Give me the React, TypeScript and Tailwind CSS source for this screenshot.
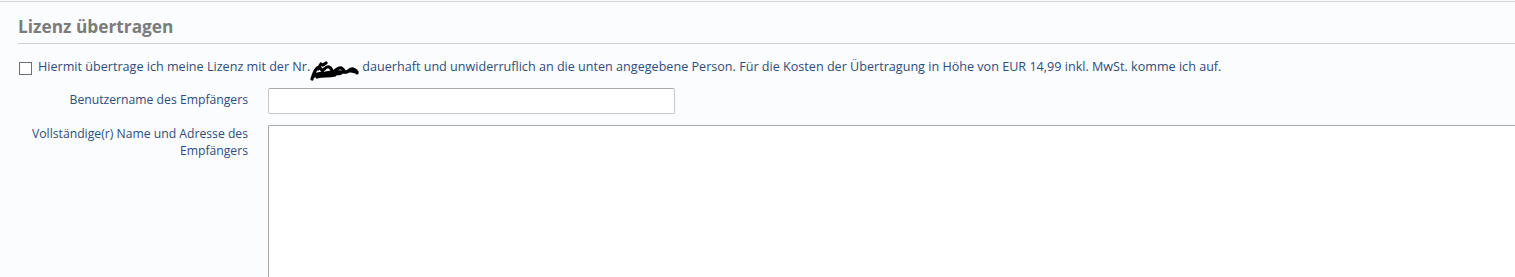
export default function App() {
  return (
    <div className="h-[277px] w-[1515px] overflow-hidden bg-[#fbfcfe] font-['Open_Sans',sans-serif] text-[12.2px] text-[#2e4d7c]">
      <div className="h-[2px] border-t border-[#d4d4d4] mt-px" />
      <div className="pl-[18px] pt-[13px]">
        <h2 className="text-[17.3px] font-bold leading-[22px] text-[#7b7b7b] pb-[5px] border-b border-[#cfcfcf]">Lizenz übertragen</h2>
        <div className="mt-[17px] flex h-[14px] items-center">
          <span className="ml-px h-[13px] w-[13px] border border-[#707070] bg-white" />
          <span className="ml-[6px] whitespace-nowrap text-[12.6px] leading-[14px]">
            Hiermit übertrage ich meine Lizenz mit der Nr.
            <svg width="50" height="20" viewBox="0 0 50 20" className="inline-block align-[-6px] -ml-[1px] mr-[3px] -my-[4px]">
              <path d="M3 18 C6 8 9 4 12 8 C14 13 16 4 20 6 C24 7 22 14 27 9 C30 6 33 6 35 10 C38 14 40 7 44 8 C47 9 48 11 48 12 M5 15 C10 10 16 14 22 11 C28 9 34 13 40 10 C44 9 46 12 48 11 M9 8 L12 3 M14 4 L17 2 M15 13 C19 9 26 15 32 12 M8 16 C14 14 20 16 26 14" stroke="#000" strokeWidth="3.2" fill="none" strokeLinecap="round" />
            </svg>
            dauerhaft und unwiderruflich an die unten angegebene Person. Für die Kosten der Übertragung in Höhe von EUR 14,99 inkl. MwSt. komme ich auf.
          </span>
        </div>
        <div className="mt-[13px] flex items-start">
          <label className="w-[230px] pt-[4px] text-right leading-[16px]">Benutzername des Empfängers</label>
          <input className="ml-[20px] h-[26px] w-[407px] rounded-[2px] border border-[#c8c8c8] border-t-[#a9a9a9] bg-white" />
        </div>
        <div className="mt-[11px] flex items-start">
          <label className="w-[230px] pt-0 text-right leading-[17px]">
            Vollständige(r) Name und Adresse des<br />Empfängers
          </label>
          <textarea className="ml-[20px] h-[200px] flex-1 rounded-tl-[2px] border-l border-t border-[#a9a9a9] bg-white shadow-[1px_1px_3px_rgba(0,0,0,0.08)] resize-none" />
        </div>
      </div>
    </div>
  );
}
